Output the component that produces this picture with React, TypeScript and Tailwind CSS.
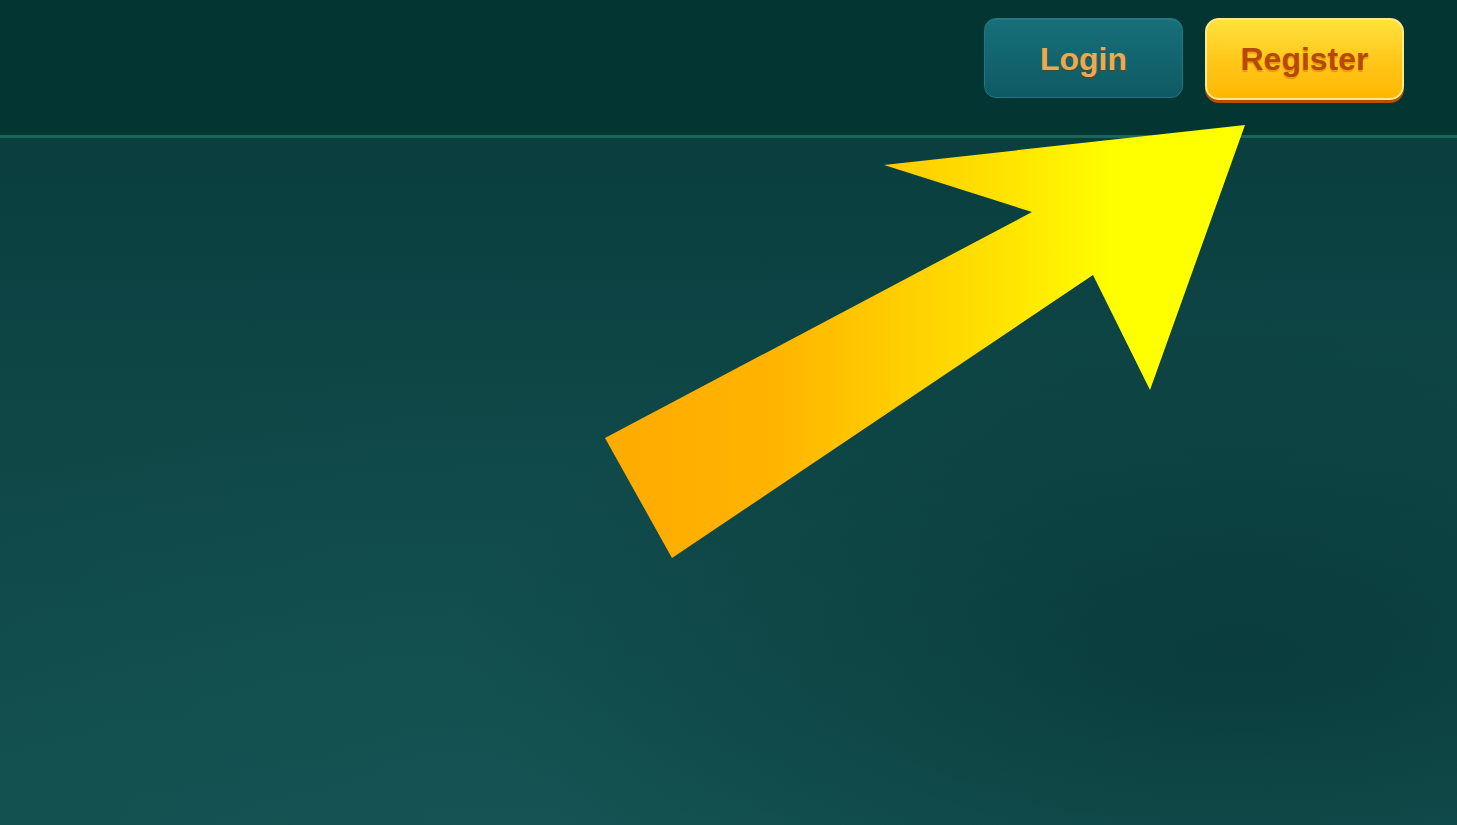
import React from 'react';

export default function App() {
  return (
    <div className="relative w-full h-[825px] overflow-hidden bg-[#0c4242] font-['Liberation_Sans',Arial,sans-serif]">
      {/* Header */}
      <header className="flex justify-end items-start gap-[22px] h-[138px] pt-[18px] pr-[53px] bg-[#033632] border-b-[3px] border-[#16695a]">
        <button className="w-[199px] h-[80px] pt-[2px] rounded-[12px] border border-[#1d7682] bg-gradient-to-b from-[#177079] to-[#0e5a64] shadow-[inset_0_1px_0_rgba(255,255,255,0.08)] text-[32px] font-bold text-[#f0a84e] [text-shadow:0_2px_1px_rgba(120,60,0,0.45)]">
          Login
        </button>
        <button className="w-[199px] h-[82px] rounded-[14px] border-2 border-[#ffe98a] bg-gradient-to-b from-[#ffe23a] via-[#ffc81a] to-[#ffb700] shadow-[0_3px_0_#b85000] text-[32px] font-bold text-[#b8480a] [text-shadow:0_2px_1px_rgba(200,120,0,0.55)]">
          Register
        </button>
      </header>

      {/* Body */}
      <main className="h-[687px] bg-[linear-gradient(180deg,#0a3e3f_0%,#0f4747_45%,#135050_100%)]">
        <div className="w-full h-full bg-[radial-gradient(ellipse_at_85%_75%,rgba(4,48,48,0.55)_0%,rgba(4,48,48,0)_45%),radial-gradient(ellipse_at_35%_100%,rgba(24,92,92,0.35)_0%,rgba(24,92,92,0)_50%)]" />
      </main>

      {/* Arrow overlay */}
      <svg className="absolute inset-0 pointer-events-none" width="1457" height="825" viewBox="0 0 1457 825">
        <defs>
          <linearGradient id="arrowGrad" x1="605" y1="0" x2="1245" y2="0" gradientUnits="userSpaceOnUse">
            <stop offset="0" stopColor="#ffab00" />
            <stop offset="0.25" stopColor="#ffb300" />
            <stop offset="0.6" stopColor="#ffe000" />
            <stop offset="0.8" stopColor="#ffff00" />
            <stop offset="1" stopColor="#ffff00" />
          </linearGradient>
        </defs>
        <polygon
          points="1245,125 884,165 1032,212 605,438 672,558 1093,275 1150,390"
          fill="url(#arrowGrad)"
        />
      </svg>
    </div>
  );
}
